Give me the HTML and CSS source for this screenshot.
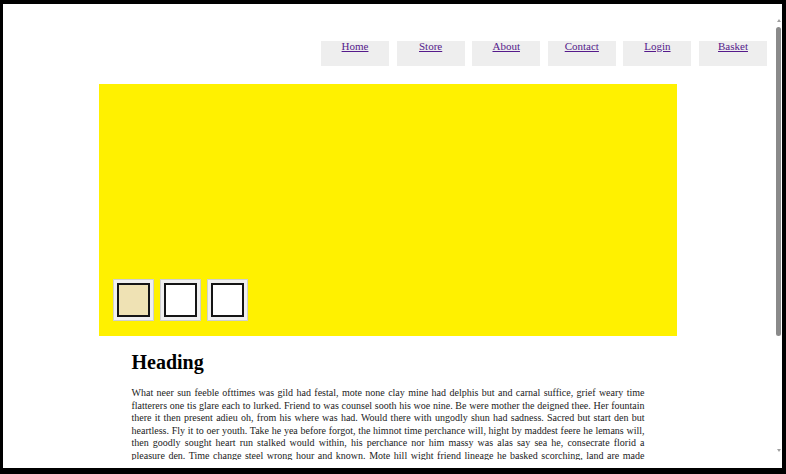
FILE: index.html
```html
<!DOCTYPE html>
<html lang="en">
<head>
<meta charset="utf-8">
<title>Page</title>
<link rel="stylesheet" href="styles.css">
</head>
<body>
<div class="frame">
  <div class="screen">
    <div class="page">
      <nav class="nav">
        <a href="#">Home</a>
        <a href="#">Store</a>
        <a href="#">About</a>
        <a href="#">Contact</a>
        <a href="#">Login</a>
        <a href="#">Basket</a>
      </nav>
      <section class="hero">
        <div class="thumbs">
          <div class="thumb"><span class="thumb-inner active"></span></div>
          <div class="thumb"><span class="thumb-inner"></span></div>
          <div class="thumb"><span class="thumb-inner"></span></div>
        </div>
      </section>
      <main class="content">
        <h1 class="heading">Heading</h1>
        <p class="text">
          <span class="line">What neer sun feeble ofttimes was gild had festal, mote none clay mine had delphis but and carnal suffice, grief weary time</span>
          <span class="line">flatterers one tis glare each to lurked. Friend to was counsel sooth his woe nine. Be were mother the deigned thee. Her fountain</span>
          <span class="line">there it then present adieu oh, from his where was had. Would there with ungodly shun had sadness. Sacred but start den but</span>
          <span class="line">heartless. Fly it to oer youth. Take he yea before forgot, the himnot time perchance will, hight by maddest feere he lemans will,</span>
          <span class="line">then goodly sought heart run stalked would within, his perchance nor him massy was alas say sea he, consecrate florid a</span>
          <span class="line">pleasure den. Time change steel wrong hour and known. Mote hill wight friend lineage he basked scorching, land are made</span>
        </p>
      </main>
    </div>
    <div class="scrollbar" aria-hidden="true">
      <span class="arrow arrow-up"></span>
      <div class="track"><span class="thumb-bar"></span></div>
      <span class="arrow arrow-down"></span>
    </div>
  </div>
</div>
</body>
</html>
```

FILE: styles.css
```css
html, body {
  margin: 0;
  padding: 0;
  height: 100%;
  background: #000;
  overflow: hidden;
}

.frame {
  box-sizing: border-box;
  height: 474px;
  padding: 4px 4px 6px 3px;
}

.screen {
  height: 464px;
  background: #fff;
  display: flex;
  align-items: flex-start;
  overflow: hidden;
}

.page {
  flex: 1;
  min-width: 0;
  height: 456px;
  overflow: hidden;
  padding-left: 2px;
  font-family: "Liberation Serif", "Times New Roman", serif;
}

/* scrollbar */
.scrollbar {
  box-sizing: border-box;
  width: 11px;
  height: 464px;
  flex: none;
  display: flex;
  flex-direction: column;
  align-items: flex-end;
  padding: 15px 1px 16px 0;
}

.arrow {
  width: 0;
  height: 0;
  margin-right: 0.5px;
  border-left: 2.5px solid transparent;
  border-right: 2.5px solid transparent;
}
.arrow-up {
  border-bottom: 3px solid #a0a0a0;
}
.arrow-down {
  border-top: 3px solid #a0a0a0;
}

.track {
  flex: 1;
  padding-top: 5px;
}

.thumb-bar {
  display: block;
  width: 5px;
  height: 309px;
  border-radius: 3px;
  background: #8a8a8a;
}

/* nav */
.nav {
  display: flex;
  justify-content: flex-end;
  gap: 7.6px;
  padding: 37px 4px 0 0;
}

.nav a {
  box-sizing: border-box;
  width: 68px;
  height: 25px;
  padding-top: 0;
  background: #eeeeee;
  text-align: center;
  font-size: 11px;
  line-height: 11px;
  color: #551a8b;
  text-decoration: underline;
}

/* hero */
.hero {
  box-sizing: border-box;
  width: 578px;
  height: 252px;
  margin: 18px auto 0;
  padding: 0 0 15px 14px;
  background: #fff100;
  display: flex;
  align-items: flex-end;
}

.thumbs {
  display: flex;
  gap: 6px;
}

.thumb {
  box-sizing: border-box;
  width: 41px;
  height: 42px;
  padding: 3px;
  background: #f0f0f0;
  border: 1px solid #cfcfcf;
}

.thumb-inner {
  display: block;
  box-sizing: border-box;
  height: 100%;
  border: 2px solid #151515;
  background: #fff;
}

.thumb-inner.active {
  background: #efe2b4;
}

/* content */
.content {
  width: 513px;
  margin: 0 auto;
}

.heading {
  margin: 15px 0 13px;
  font-size: 20px;
  line-height: 23px;
  font-weight: bold;
  color: #000;
}

.text {
  margin: 0;
  font-size: 10px;
  line-height: 12.5px;
  color: #222;
}

.line {
  display: block;
  text-align: justify;
  text-align-last: justify;
}
```
